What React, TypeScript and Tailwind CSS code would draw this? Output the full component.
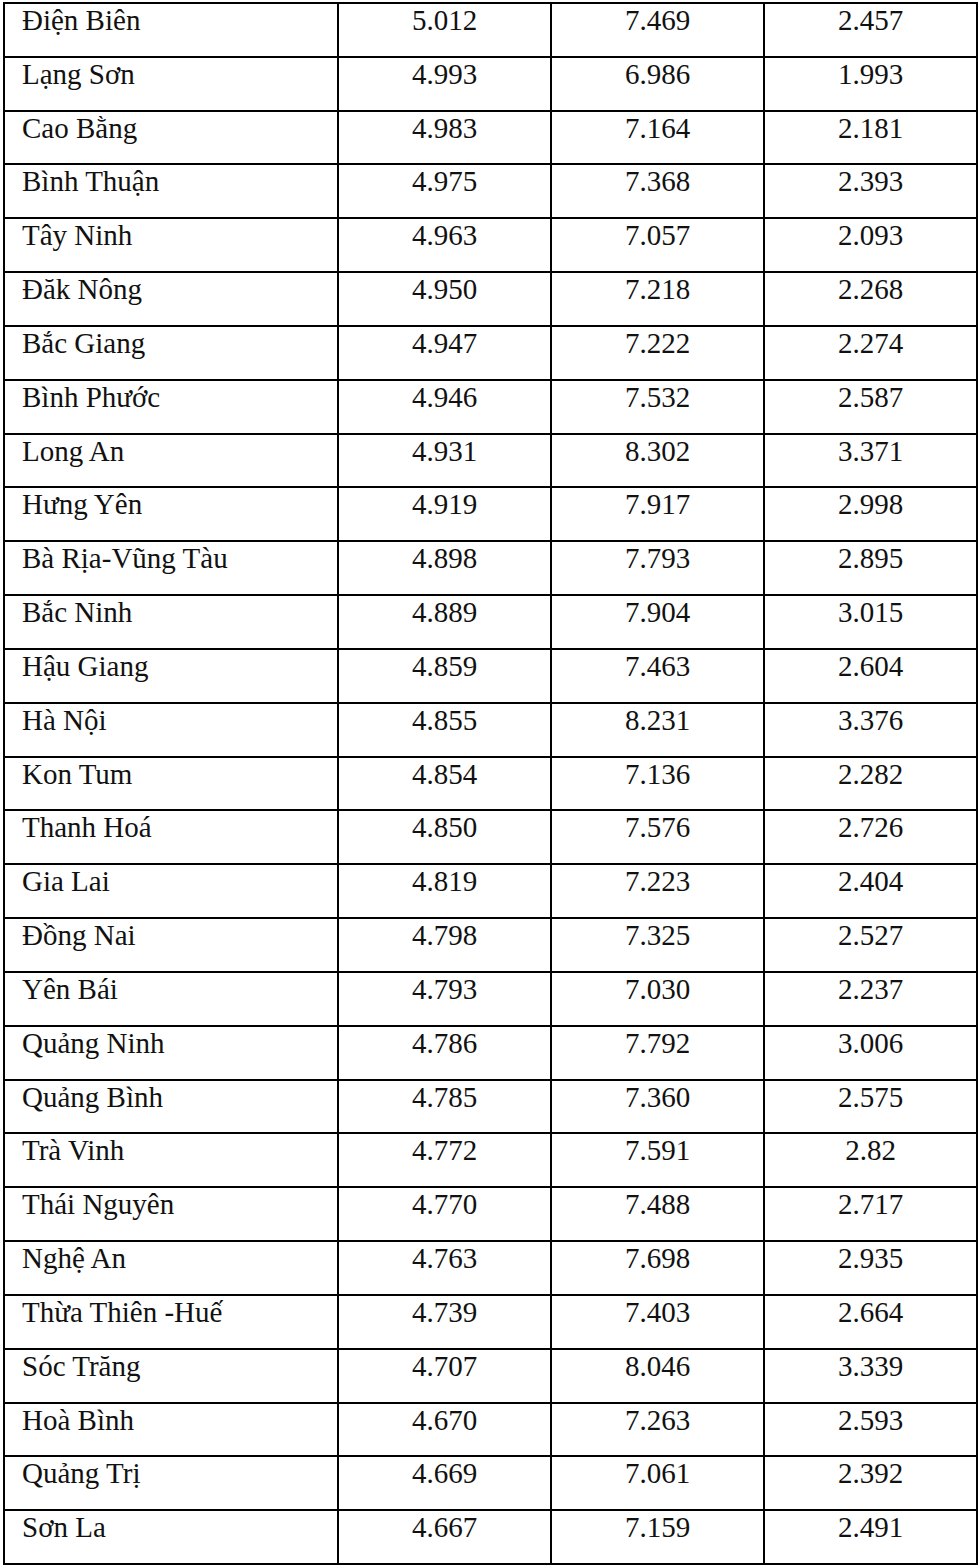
const rows: [string, string, string, string][] = [
  ["Điện Biên", "5.012", "7.469", "2.457"],
  ["Lạng Sơn", "4.993", "6.986", "1.993"],
  ["Cao Bằng", "4.983", "7.164", "2.181"],
  ["Bình Thuận", "4.975", "7.368", "2.393"],
  ["Tây Ninh", "4.963", "7.057", "2.093"],
  ["Đăk Nông", "4.950", "7.218", "2.268"],
  ["Bắc Giang", "4.947", "7.222", "2.274"],
  ["Bình Phước", "4.946", "7.532", "2.587"],
  ["Long An", "4.931", "8.302", "3.371"],
  ["Hưng Yên", "4.919", "7.917", "2.998"],
  ["Bà Rịa-Vũng Tàu", "4.898", "7.793", "2.895"],
  ["Bắc Ninh", "4.889", "7.904", "3.015"],
  ["Hậu Giang", "4.859", "7.463", "2.604"],
  ["Hà Nội", "4.855", "8.231", "3.376"],
  ["Kon Tum", "4.854", "7.136", "2.282"],
  ["Thanh Hoá", "4.850", "7.576", "2.726"],
  ["Gia Lai", "4.819", "7.223", "2.404"],
  ["Đồng Nai", "4.798", "7.325", "2.527"],
  ["Yên Bái", "4.793", "7.030", "2.237"],
  ["Quảng Ninh", "4.786", "7.792", "3.006"],
  ["Quảng Bình", "4.785", "7.360", "2.575"],
  ["Trà Vinh", "4.772", "7.591", "2.82"],
  ["Thái Nguyên", "4.770", "7.488", "2.717"],
  ["Nghệ An", "4.763", "7.698", "2.935"],
  ["Thừa Thiên -Huế", "4.739", "7.403", "2.664"],
  ["Sóc Trăng", "4.707", "8.046", "3.339"],
  ["Hoà Bình", "4.670", "7.263", "2.593"],
  ["Quảng Trị", "4.669", "7.061", "2.392"],
  ["Sơn La", "4.667", "7.159", "2.491"],
];

const cell =
  "h-[53.83px] border-r-2 border-b-2 border-black text-[29px] leading-[32px] text-[#111]";

export default function App() {
  return (
    <div className="min-h-screen w-full bg-white pl-[3px] pt-[2px] [font-family:Liberation_Serif,serif]">
      <div className="grid w-[975px] grid-cols-[334px_213px_213px_213px] border-l-2 border-t-2 border-black">
        {rows.map(([name, a, b, c]) => (
          <div key={name} className="contents">
            <div className={`${cell} pl-[17px]`}>{name}</div>
            <div className={`${cell} text-center`}>{a}</div>
            <div className={`${cell} text-center`}>{b}</div>
            <div className={`${cell} text-center`}>{c}</div>
          </div>
        ))}
      </div>
    </div>
  );
}
